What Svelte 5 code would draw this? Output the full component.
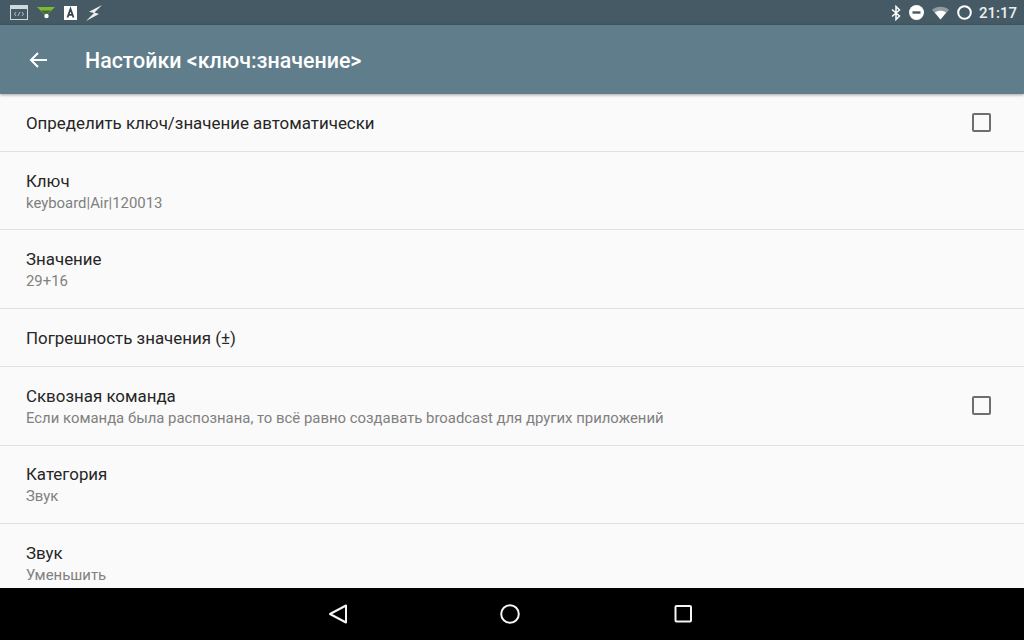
<script lang="ts">
  interface Row {
    title: string;
    summary?: string;
    check?: boolean;
  }

  const rows: Row[] = [
    { title: 'Определить ключ/значение автоматически', check: true },
    { title: 'Ключ', summary: 'keyboard|Air|120013' },
    { title: 'Значение', summary: '29+16' },
    { title: 'Погрешность значения (±)' },
    {
      title: 'Сквозная команда',
      summary: 'Если команда была распознана, то всё равно создавать broadcast для других приложений',
      check: true
    },
    { title: 'Категория', summary: 'Звук' },
    { title: 'Звук', summary: 'Уменьшить' }
  ];
</script>

<div class="screen">
  <div class="status">
    <div class="status-left">
      <svg width="18" height="15" viewBox="0 0 18 15">
        <rect x="0.5" y="0.500" width="17" height="14" fill="none" stroke="#cfd8dc" />
        <rect x="0.5" y="0.500" width="17" height="3.500" fill="#cfd8dc" />
        <path d="M6 7 4.500 9 6 11M12 7l1.500 2-1.500 2M8 11l2-4" fill="none" stroke="#b0bec5" />
      </svg>
      <svg width="18" height="13" viewBox="0 0 18 13">
        <path d="M0 1 18 1 10 9H8z" fill="#7cb832" />
        <path d="M4 4.500H14L9.500 9H8.500z" fill="#263238" fill-opacity="0.6" />
        <circle cx="9.500" cy="10" r="2.200" fill="#fff" />
      </svg>
      <svg width="13" height="14" viewBox="0 0 13 14">
        <rect width="13" height="14" fill="#fff" />
        <path d="M3.500 11.500 6.500 3l3 8.500M4.500 8.800h4" fill="none" stroke="#37474f" stroke-width="1.800" />
      </svg>
      <svg width="16" height="16" viewBox="0 0 16 16">
        <path d="M16 0 3 6.800 8 8 0 16 13 9 8.500 7.500z" fill="#eceff1" />
      </svg>
    </div>
    <div class="status-right">
      <svg class="bt" width="10" height="16" viewBox="0 0 10 16">
        <path d="M1 4.500 8.500 11 5 14.500V1.500L8.500 5 1 11.500" fill="none" stroke="#fff" stroke-width="1.500" />
      </svg>
      <svg class="dnd" width="15" height="15" viewBox="0 0 15 15">
        <circle cx="7.500" cy="7.500" r="7.500" fill="#fff" />
        <rect x="3.500" y="6.300" width="8" height="2.400" fill="#455a64" />
      </svg>
      <svg class="wifi" width="17" height="14" viewBox="0 0 18 14">
        <path d="M0 3.500C5 -0.800 13 -0.800 18 3.500L9 14z" fill="#fff" fill-opacity="0.4" />
        <path d="M3 6.500C6.500 4 11.500 4 15 6.500L9 14z" fill="#fff" />
      </svg>
      <svg class="battery" width="15" height="15" viewBox="0 0 15 15">
        <circle cx="7.500" cy="7.500" r="6.300" fill="none" stroke="#fff" stroke-width="2" />
      </svg>
      <span class="clock">21:17</span>
    </div>
  </div>

  <header class="toolbar">
    <svg width="18" height="16" viewBox="0 0 18 16">
      <path d="M18 8H2M9 1 2 8l7 7" fill="none" stroke="#fff" stroke-width="2" />
    </svg>
    <h1>Настойки &lt;ключ:значение&gt;</h1>
  </header>

  <main class="list">
    {#each rows as row}
      <div class="row" class:tall={row.summary}>
        <div class="text">
          <div class="title">{row.title}</div>
          {#if row.summary}
            <div class="summary">{row.summary}</div>
          {/if}
        </div>
        {#if row.check}
          <span class="checkbox"></span>
        {/if}
      </div>
    {/each}
  </main>

  <nav class="navbar">
    <svg width="20" height="20" viewBox="0 0 20 20">
      <path d="M19 1.500V18.500L3 10z" fill="none" stroke="#f5f5f5" stroke-width="2" stroke-linejoin="round" />
    </svg>
    <svg width="20" height="20" viewBox="0 0 20 20">
      <circle cx="10" cy="10" r="8.800" fill="none" stroke="#f5f5f5" stroke-width="2" />
    </svg>
    <svg width="20" height="20" viewBox="0 0 20 20">
      <rect x="2.500" y="2" width="15.500" height="15.500" rx="1" fill="none" stroke="#f5f5f5" stroke-width="2" />
    </svg>
  </nav>
</div>

<style>
  :global(body) {
    margin: 0;
  }

  .screen {
    width: 1024px;
    height: 640px;
    display: flex;
    flex-direction: column;
    overflow: hidden;
    background: #fafafa;
    font-family: Roboto, "Noto Sans", sans-serif;
  }

  .status {
    flex: 0 0 25px;
    display: flex;
    align-items: center;
    justify-content: space-between;
    padding: 0 7px 0 10px;
    background: #455a64;
  }

  .status-left,
  .status-right {
    display: flex;
    align-items: center;
  }

  .status-left {
    gap: 9px;
  }

  .status-right {
    gap: 8px;
  }

  .clock {
    margin-left: -1px;
    font-size: 15px;
    font-weight: 500;
    color: #eceff1;
  }

  .toolbar {
    flex: 0 0 69px;
    display: flex;
    align-items: center;
    gap: 38px;
    padding: 0 0 0 29px;
    background: #607d8b;
    box-shadow: 0 1px 3px rgba(0, 0, 0, 0.35);
    position: relative;
  }

  .toolbar h1 {
    margin: 0;
    padding-top: 2px;
    font-size: 21.400px;
    font-weight: 500;
    color: #fff;
  }

  .list {
    flex: 1 1 auto;
    min-height: 0;
    overflow: hidden;
    padding-top: 1px;
  }

  .row {
    box-sizing: border-box;
    height: 58.400px;
    display: flex;
    align-items: center;
    justify-content: space-between;
    padding: 0 33px 0 26px;
    border-bottom: 1px solid #e0e0e0;
  }

  .row.tall {
    height: 78.450px;
  }

  .row:first-child {
    height: 57px;
  }

  .row:first-child .checkbox {
    margin-top: -1px;
  }

  .row:first-child .text {
    padding-top: 0;
  }

  .text {
    padding-top: 1px;
  }

  .title {
    font-size: 16.900px;
    line-height: 22px;
    color: #262626;
  }

  .summary {
    margin-top: 1px;
    font-size: 14.900px;
    line-height: 20px;
    color: #808080;
  }

  .checkbox {
    box-sizing: border-box;
    width: 19px;
    height: 19px;
    border: 2px solid #6e6e6e;
    border-radius: 2px;
  }

  .navbar {
    flex: 0 0 52px;
    display: flex;
    align-items: center;
    justify-content: center;
    gap: 153px;
    padding-right: 4px;
    background: #000;
  }
</style>
